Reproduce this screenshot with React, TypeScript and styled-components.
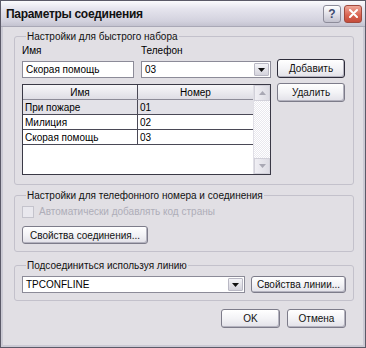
import styled, { createGlobalStyle } from "styled-components";

const GlobalStyle = createGlobalStyle`
  * { box-sizing: border-box; }
  html, body { margin: 0; padding: 0; background: #ffffff; }
  body {
    font-family: "Liberation Sans", Arial, sans-serif;
    font-size: 10px;
    color: #000;
  }
`;

const Window = styled.div`
  width: 366px;
  height: 348px;
  background: #e1dfe4;
  border: 1px solid #5b5a68;
  box-shadow: inset 0 0 0 2px #cbcad4;
  display: flex;
  flex-direction: column;
`;

const TitleBar = styled.div`
  height: 26px;
  flex-shrink: 0;
  display: flex;
  align-items: center;
  justify-content: space-between;
  padding: 0 3px 0 5px;
  background: linear-gradient(#fbfbfd 0%, #e6e5ee 30%, #d3d2de 80%, #c4c3d0 100%);
  border-bottom: 1px solid #a9a8b6;
`;

const Title = styled.div`
  font-family: "Liberation Sans", Arial, sans-serif;
  font-weight: 700;
  font-size: 12px;
  letter-spacing: -0.3px;
  color: #111;
`;

const CaptionButtons = styled.div`
  display: flex;
  gap: 3px;
`;

const CaptionButton = styled.div<{ $close?: boolean }>`
  width: 18px;
  height: 18px;
  border-radius: 3px;
  display: flex;
  align-items: center;
  justify-content: center;
  border: 1px solid ${({ $close }) => ($close ? "#a04a3e" : "#8d8c9a")};
  background: ${({ $close }) =>
    $close
      ? "linear-gradient(#f0a89a, #d8614f 60%, #c54c3b)"
      : "linear-gradient(#ffffff, #dcdbe4 60%, #c3c2ce)"};
  color: #3d4a70;
  font-weight: 700;
  font-size: 12px;
`;

const Body = styled.div`
  flex: 1;
  display: flex;
  flex-direction: column;
  padding: 3px 11px 0 13px;
`;

const Group = styled.fieldset<{ $mt?: number; $pad: string }>`
  margin: ${({ $mt }) => $mt ?? 0}px 0 0 0;
  padding: ${({ $pad }) => $pad};
  border: 1px solid #c3c1cb;
  border-radius: 3px;
  min-width: 0;
`;

const Legend = styled.legend`
  padding: 0 1px;
  margin-left: 4px;
  line-height: 13px;
  color: #111;
`;

const QuickDial = styled.div`
  display: grid;
  grid-template-columns: 249px 68px;
  column-gap: 6px;
`;

const LeftCol = styled.div`
  display: flex;
  flex-direction: column;
  gap: 6px;
`;

const FieldsRow = styled.div`
  display: flex;
  gap: 7px;
`;

const Field = styled.div<{ $w?: number }>`
  display: flex;
  flex-direction: column;
  gap: 4px;
  ${({ $w }) => ($w ? `width: ${$w}px;` : "flex: 1;")}
`;

const Label = styled.div`
  line-height: 13px;
  height: 13px;
`;

const TextInput = styled.div`
  height: 17px;
  background: #fff;
  border: 1px solid #8c8b98;
  padding: 0 3px;
  line-height: 15px;
  white-space: nowrap;
  overflow: hidden;
`;

const ComboBox = styled.div<{ $h?: number }>`
  height: ${({ $h }) => $h ?? 17}px;
  background: #fff;
  border: 1px solid #8c8b98;
  display: flex;
  align-items: stretch;
  flex: 1;
`;

const ComboText = styled.div`
  flex: 1;
  padding: 0 3px;
  display: flex;
  align-items: center;
  white-space: nowrap;
`;

const DropButton = styled.div`
  width: 15px;
  margin: 1px;
  background: linear-gradient(#f4f4f8, #d4d3dc);
  border: 1px solid #b9b8c4;
  border-radius: 1px;
  display: flex;
  align-items: center;
  justify-content: center;
`;

const ButtonCol = styled.div`
  display: flex;
  flex-direction: column;
  gap: 5px;
  padding-top: 15px;
`;

const Button = styled.div<{ $default?: boolean; $w?: number; $h?: number }>`
  height: ${({ $h }) => $h ?? 19}px;
  ${({ $w }) => ($w ? `width: ${$w}px;` : "")}
  display: flex;
  align-items: center;
  justify-content: center;
  padding: 0 4px;
  white-space: nowrap;
  border-radius: 3px;
  border: 1px solid ${({ $default }) => ($default ? "#2d2c3a" : "#7d7c8a")};
  background: linear-gradient(#ffffff 0%, #f3f3f6 50%, #e2e1e8 100%);
  box-shadow: inset -1px -1px 0 #b4b3bf;
  color: #111;
`;

const ListView = styled.div`
  height: 91px;
  border: 1px solid #3a3946;
  background: #fff;
  display: flex;
`;

const ListMain = styled.div`
  flex: 1;
  display: flex;
  flex-direction: column;
`;

const ListRow = styled.div<{ $header?: boolean; $selected?: boolean }>`
  display: grid;
  grid-template-columns: 114px 1fr;
  height: 15px;
  border-bottom: 1px solid ${({ $header }) => ($header ? "#8c8b98" : "#4a4956")};
  background: ${({ $header, $selected }) =>
    $header ? "linear-gradient(#f7f7f9, #dedde5)" : $selected ? "#e3e2e8" : "#fff"};
`;

const Cell = styled.div<{ $header?: boolean }>`
  display: flex;
  align-items: center;
  justify-content: ${({ $header }) => ($header ? "center" : "flex-start")};
  padding: 0 2px;
  line-height: 13px;
  white-space: nowrap;
  & + & {
    border-left: 1px solid ${({ $header }) => ($header ? "#9a99a6" : "#4a4956")};
  }
`;

const ScrollBar = styled.div`
  width: 17px;
  display: flex;
  flex-direction: column;
  border-left: 1px solid #e0dfe6;
  background: repeating-conic-gradient(#ffffff 0 25%, #e9e8ee 0 50%) 0 0 / 2px 2px;
`;

const ScrollArrow = styled.div`
  height: 16px;
  background: linear-gradient(90deg, #f0eff4, #dddce4);
  border: 1px solid #d2d1da;
  display: flex;
  align-items: center;
  justify-content: center;
`;

const ScrollTrack = styled.div`
  flex: 1;
`;

const CheckRow = styled.div`
  display: flex;
  align-items: center;
  gap: 5px;
  height: 13px;
  color: #aeadb8;
`;

const CheckBox = styled.div`
  width: 12px;
  height: 12px;
  border: 1px solid #c4c3cc;
  background: #e9e8ee;
`;

const StackCol = styled.div<{ $gap: number }>`
  display: flex;
  flex-direction: column;
  align-items: flex-start;
  gap: ${({ $gap }) => $gap}px;
`;

const LineRow = styled.div`
  display: flex;
  gap: 6px;
  align-items: center;
`;

const Footer = styled.div`
  display: flex;
  justify-content: flex-end;
  gap: 7px;
  padding: 8px 8px 0 0;
`;

const DownTriangle = ({ color = "#111" }: { color?: string }) => (
  <svg width="7" height="4" viewBox="0 0 7 4">
    <path d="M0 0h7L3.5 4z" fill={color} />
  </svg>
);

const UpTriangle = ({ color = "#a9a8b4" }: { color?: string }) => (
  <svg width="7" height="4" viewBox="0 0 7 4">
    <path d="M0 4h7L3.5 0z" fill={color} />
  </svg>
);

const entries = [
  { name: "При пожаре", phone: "01" },
  { name: "Милиция", phone: "02" },
  { name: "Скорая помощь", phone: "03" },
];

export default function App() {
  return (
    <>
      <GlobalStyle />
      <Window>
        <TitleBar>
          <Title>Параметры соединения</Title>
          <CaptionButtons>
            <CaptionButton>?</CaptionButton>
            <CaptionButton $close>
              <svg width="9" height="9" viewBox="0 0 9 9">
                <path d="M1 1l7 7M8 1l-7 7" stroke="#fff" strokeWidth="2" strokeLinecap="round" />
              </svg>
            </CaptionButton>
          </CaptionButtons>
        </TitleBar>

        <Body>
          <Group $pad="1px 7px 9px 7px">
            <Legend>Настройки для быстрого набора</Legend>
            <QuickDial>
              <LeftCol>
                <FieldsRow>
                  <Field $w={112}>
                    <Label>Имя</Label>
                    <TextInput>Скорая помощь</TextInput>
                  </Field>
                  <Field>
                    <Label>Телефон</Label>
                    <ComboBox>
                      <ComboText>03</ComboText>
                      <DropButton>
                        <DownTriangle />
                      </DropButton>
                    </ComboBox>
                  </Field>
                </FieldsRow>
                <ListView>
                  <ListMain>
                    <ListRow $header>
                      <Cell $header>Имя</Cell>
                      <Cell $header>Номер</Cell>
                    </ListRow>
                    {entries.map((e, i) => (
                      <ListRow key={e.phone} $selected={i === 0}>
                        <Cell>{e.name}</Cell>
                        <Cell>{e.phone}</Cell>
                      </ListRow>
                    ))}
                  </ListMain>
                  <ScrollBar>
                    <ScrollArrow>
                      <UpTriangle />
                    </ScrollArrow>
                    <ScrollTrack />
                    <ScrollArrow>
                      <DownTriangle color="#a9a8b4" />
                    </ScrollArrow>
                  </ScrollBar>
                </ListView>
              </LeftCol>
              <ButtonCol>
                <Button $default>Добавить</Button>
                <Button>Удалить</Button>
              </ButtonCol>
            </QuickDial>
          </Group>

          <Group $mt={4} $pad="3px 7px 7px 7px">
            <Legend>Настройки для телефонного номера и соединения</Legend>
            <StackCol $gap={8}>
              <CheckRow>
                <CheckBox />
                Автоматически добавлять код страны
              </CheckRow>
              <Button $h={18} $w={126}>
                Свойства соединения...
              </Button>
            </StackCol>
          </Group>

          <Group $mt={7} $pad="4px 7px 7px 7px">
            <Legend>Подсоединиться используя линию</Legend>
            <LineRow>
              <ComboBox $h={17}>
                <ComboText>TPCONFLINE</ComboText>
                <DropButton>
                  <DownTriangle />
                </DropButton>
              </ComboBox>
              <Button $h={17} $w={95}>
                Свойства линии...
              </Button>
            </LineRow>
          </Group>

          <Footer>
            <Button $w={59}>OK</Button>
            <Button $w={59}>Отмена</Button>
          </Footer>
        </Body>
      </Window>
    </>
  );
}
